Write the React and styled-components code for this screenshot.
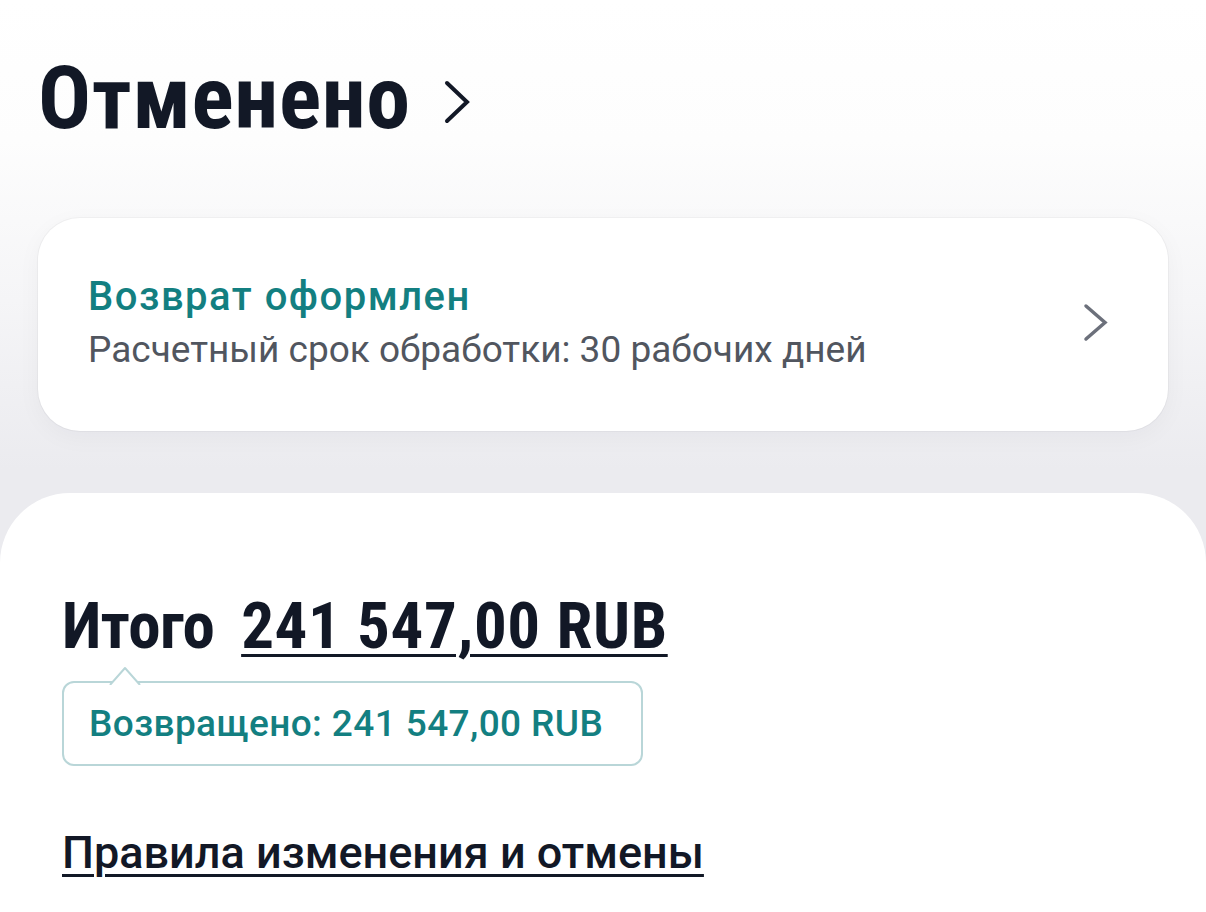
import React from "react";
import styled, { createGlobalStyle } from "styled-components";

const GlobalStyle = createGlobalStyle`
  html, body { margin: 0; padding: 0; }
  body {
    font-family: Roboto, "Noto Sans", sans-serif;
    color: #121826;
    -webkit-font-smoothing: antialiased;
  }
  * { box-sizing: border-box; }
`;

const Page = styled.div`
  min-height: 100vh;
  display: flex;
  flex-direction: column;
  background: linear-gradient(
    180deg,
    #ffffff 0px,
    #fdfdfd 140px,
    #f5f5f7 300px,
    #ebebef 470px
  );
`;

const Header = styled.header`
  display: flex;
  align-items: center;
  gap: 33px;
  padding: 54px 38px 0;
`;

const Title = styled.h1`
  margin: 0;
  font-family: "Roboto Condensed", Roboto, sans-serif;
  font-size: 88px;
  line-height: 1;
  font-weight: 700;
  letter-spacing: 0.7px;
  color: #121826;
`;

const Chevron = styled.svg`
  flex: none;
  display: block;
  margin-top: ${(p) => p.$shift || 0}px;
`;

const Section = styled.section`
  padding: 76px 38px 0;
`;

const StatusCard = styled.div`
  display: flex;
  align-items: center;
  justify-content: space-between;
  padding: 59px 60px 63px 50px;
  background: #ffffff;
  border-radius: 42px;
  box-shadow: 0 0 0 1px rgba(20, 24, 40, 0.035), 0 6px 24px rgba(20, 24, 40, 0.04);
`;

const CardText = styled.div`
  display: flex;
  flex-direction: column;
  gap: 14px;
`;

const CardTitle = styled.div`
  font-size: 40px;
  line-height: 1;
  font-weight: 500;
  letter-spacing: 1.5px;
  color: #137f81;
`;

const CardNote = styled.div`
  font-size: 37px;
  line-height: 1;
  font-weight: 400;
  color: #51565f;
`;

const Sheet = styled.main`
  flex: 1;
  margin-top: 62px;
  background: #ffffff;
  border-radius: 70px 70px 0 0;
  padding: 101px 62px 40px;
`;

const TotalRow = styled.div`
  display: flex;
  align-items: baseline;
  gap: 27px;
  font-family: "Roboto Condensed", Roboto, sans-serif;
  font-size: 65px;
  line-height: 1;
  font-weight: 700;
  color: #121826;
`;

const TotalLabel = styled.span`
  letter-spacing: -0.8px;
`;

const Amount = styled.span`
  letter-spacing: 0.6px;
  text-decoration: underline;
  text-decoration-thickness: 3px;
  text-underline-offset: 6px;
`;

const Refund = styled.div`
  position: relative;
  display: inline-block;
  margin-top: 22px;
  padding: 22px 38px 22px 25px;
  border: 2px solid #b9d6d8;
  border-radius: 12px;
  background: #ffffff;
  font-size: 37px;
  line-height: 1;
  font-weight: 500;
  letter-spacing: 0.4px;
  color: #137f81;
`;

const RefundArrow = styled.svg`
  position: absolute;
  top: -17px;
  left: 45px;
  display: block;
`;

const RulesLink = styled.a`
  display: inline-block;
  margin-top: 64px;
  font-size: 45px;
  line-height: 1;
  font-weight: 500;
  color: #121826;
  text-decoration: underline;
  text-decoration-thickness: 3px;
  text-underline-offset: 6px;
  cursor: pointer;
`;

const Stack = styled.div`
  display: flex;
  flex-direction: column;
  align-items: flex-start;
`;

export default function App() {
  return (
    <Page>
      <GlobalStyle />
      <Header>
        <Title>Отменено</Title>
        <Chevron $shift={8} width="26" height="44" viewBox="0 0 26 44">
          <polyline
            points="3,3 23,22 3,41"
            fill="none"
            stroke="#121826"
            strokeWidth="4"
            strokeLinecap="round"
            strokeLinejoin="miter"
          />
        </Chevron>
      </Header>

      <Section>
        <StatusCard>
          <CardText>
            <CardTitle>Возврат оформлен</CardTitle>
            <CardNote>Расчетный срок обработки: 30 рабочих дней</CardNote>
          </CardText>
          <Chevron width="25" height="39" viewBox="0 0 25 39">
            <polyline
              points="3,3 22,19.5 3,36"
              fill="none"
              stroke="#6c707b"
              strokeWidth="3.5"
              strokeLinecap="round"
              strokeLinejoin="miter"
            />
          </Chevron>
        </StatusCard>
      </Section>

      <Sheet>
        <Stack>
          <TotalRow>
            <TotalLabel>Итого</TotalLabel>
            <Amount>241 547,00 RUB</Amount>
          </TotalRow>
          <Refund>
            <RefundArrow width="32" height="19" viewBox="0 0 32 19">
              <path d="M1 19 L16 2 L31 19" fill="#ffffff" stroke="#b9d6d8" strokeWidth="2" strokeLinejoin="round" />
            </RefundArrow>
            Возвращено: 241 547,00 RUB
          </Refund>
          <RulesLink>Правила изменения и отмены</RulesLink>
        </Stack>
      </Sheet>
    </Page>
  );
}
